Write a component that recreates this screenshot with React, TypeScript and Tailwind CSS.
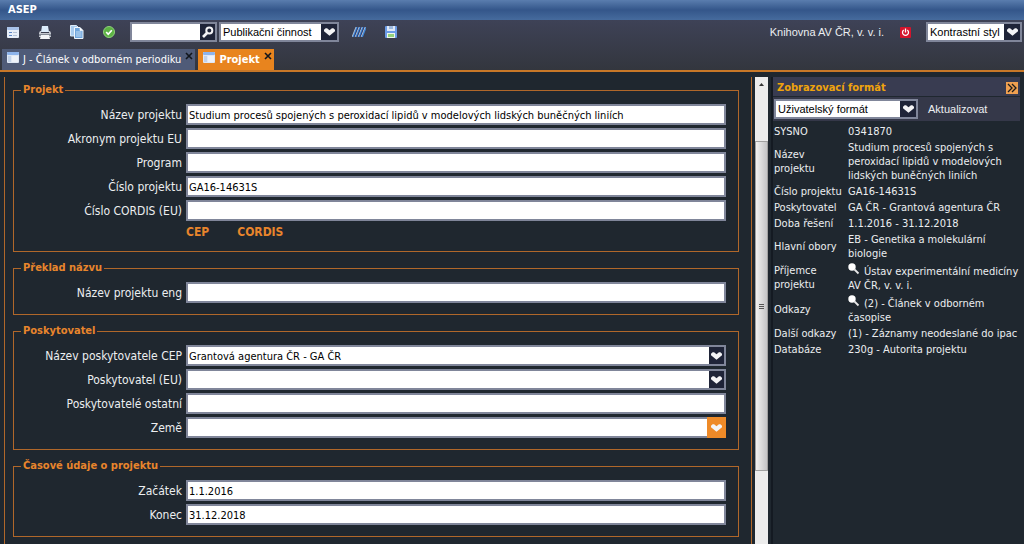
import { useState } from "react";
import type { ReactNode } from "react";

const projectFields = [
  { id: "title", label: "Název projektu", value: "Studium procesů spojených s peroxidací lipidů v modelových lidských buněčných liniích" },
  { id: "acronym", label: "Akronym projektu EU", value: "" },
  { id: "program", label: "Program", value: "" },
  { id: "number", label: "Číslo projektu", value: "GA16-14631S" },
  { id: "cordis", label: "Ćíslo CORDIS (EU)", value: "" },
];

const details = [
  { label: "SYSNO", text: "0341870" },
  { label: "Název projektu", text: "Studium procesů spojených s peroxidací lipidů v modelových lidských buněčných liniích" },
  { label: "Číslo projektu", text: "GA16-14631S" },
  { label: "Poskytovatel", text: "GA ČR - Grantová agentura ČR" },
  { label: "Doba řešení", text: "1.1.2016 - 31.12.2018" },
  { label: "Hlavní obory", text: "EB - Genetika a molekulární biologie" },
  { label: "Příjemce projektu", text: "Ústav experimentální medicíny AV ČR, v. v. i.", search: true },
  { label: "Odkazy", text: "(2) - Článek v odborném časopise", search: true },
  { label: "Další odkazy", text: "(1) - Záznamy neodeslané do ipac" },
  { label: "Databáze", text: "230g - Autorita projektu" },
];

function HeartArrow() {
  return (
    <svg viewBox="0 0 10 7" className="h-2 w-[11px]" fill="#f4f4f6">
      <path d="M0 1.5 1.5 0h1.3L5 2 7.2 0h1.3L10 1.5v1.3L5 7 0 2.8z" />
    </svg>
  );
}

function FormIcon() {
  return (
    <svg viewBox="0 0 12 11" className="h-[11px] w-3">
      <rect width="12" height="11" rx="1" fill="#e8eef8" />
      <rect width="12" height="3" rx="1" fill="#a9c3ea" />
      <path d="M2 5h3v1H2zM2 8h3v1H2z" fill="#5e86c4" />
      <path d="M6 5h4v1H6zM6 8h4v1H6z" fill="#b4c0d4" />
    </svg>
  );
}

function WindowIcon() {
  return (
    <svg viewBox="0 0 12 11" className="h-[11px] w-3">
      <rect width="12" height="11" rx="1" fill="#dfe8f5" />
      <rect width="12" height="3" rx="1" fill="#8db4ec" />
      <path d="M1 4h3v6H1z" fill="#c3d3ea" />
      <path d="M5 4h6v6H5z" fill="#eef2f9" />
    </svg>
  );
}

function PrinterIcon() {
  return (
    <svg viewBox="0 0 14 13" className="h-[13px] w-[14px]">
      <path d="M4 0h6l1 6H3z" fill="#dcecfb" />
      <path d="M2 5h1v2h8V5h1l1 2v4H1V7z" fill="#c4c8d0" />
      <path d="M1 8h12v2H1z" fill="#858b96" />
      <path d="M3 9h8l1 4H2z" fill="#f3f5f8" />
    </svg>
  );
}

function CopyIcon() {
  return (
    <svg viewBox="0 0 14 14" className="size-[14px]">
      <path d="M.5.5h6L9 3v8H.5z" fill="#a8cbee" stroke="#dcebf8" />
      <path d="M4.500 2.500h5.500l3 3v8H4.500z" fill="#6fa5dc" stroke="#eef6fd" />
      <path d="M6 7h5.500M6 9h5.500M6 11h5.500" stroke="#c5def5" />
      <path d="M10 2.500v3h3" fill="#fff" stroke="#fff" strokeWidth=".6" />
    </svg>
  );
}

function CheckIcon() {
  return (
    <svg viewBox="0 0 12 12" className="size-3">
      <circle cx="6" cy="6" r="5.500" fill="#5cb343" stroke="#8fd07c" />
      <path d="m3.200 6 2 2.200 3.600-4" fill="none" stroke="#fff" strokeWidth="1.700" />
    </svg>
  );
}

function StripesIcon() {
  return (
    <svg viewBox="0 0 14 10" className="h-[10px] w-[14px]" fill="none">
      <path d="M1 10 5 0M4 10 8 0M7 10l4-10M10 10l4-10" stroke="#3f86d6" strokeWidth="1.700" />
      <path d="M0 10 4 0M3 10 7 0M6 10l4-10M9 10l4-10" stroke="#e0e6f2" strokeWidth=".7" />
      <path d="M2 10 6 0M5 10 9 0M8 10l4-10" stroke="#1d2c6e" strokeWidth=".6" />
    </svg>
  );
}

function SaveIcon() {
  return (
    <svg viewBox="0 0 12 12" className="size-3">
      <rect width="12" height="12" rx="1" fill="#6b9be6" />
      <path d="M2 0h8v5H2z" fill="#dfe9f7" />
      <path d="M4 0h4v3H4z" fill="#9db9de" />
      <path d="M2 7h8v5H2z" fill="#eef6ea" />
      <path d="M3 8h6v3H3z" fill="#93d27c" />
    </svg>
  );
}

function PowerIcon() {
  return (
    <svg viewBox="0 0 11 11" className="size-[11px]" fill="none">
      <rect width="11" height="11" rx="1" fill="#d4142c" />
      <path d="M3.700 3a3 3 0 1 0 3.600 0M5.500 1.500v4" stroke="#fff" strokeWidth="1.300" />
    </svg>
  );
}

function SearchIcon() {
  return (
    <svg viewBox="0 0 12 12" className="size-3" fill="none" stroke="#f4f4f6">
      <circle cx="7.300" cy="4.500" r="3" strokeWidth="2" />
      <path d="M5 7 1 11" strokeWidth="2.600" />
    </svg>
  );
}

function LensIcon() {
  return (
    <svg viewBox="0 0 12 12" className="size-3">
      <circle cx="4" cy="4" r="3.700" fill="#fff" />
      <path d="m6.500 6.500 4 4" stroke="#e8e8e8" strokeWidth="1.800" />
    </svg>
  );
}

function ToolButton({ label, children }: { label: string; children: ReactNode }) {
  return (
    <button aria-label={label} className="flex size-4 items-center justify-center">
      {children}
    </button>
  );
}

function Dropdown({ label, value, className }: { label: string; value: string; className: string }) {
  return (
    <div className={`relative h-5 border-2 border-[#80869a] bg-white ${className}`}>
      <select
        aria-label={label}
        defaultValue={value}
        className="h-full w-full appearance-none pl-[2px] pr-4 font-['Liberation_Sans',sans-serif] text-[11px] leading-4 text-black outline-none"
      >
        <option>{value}</option>
      </select>
      <span className="pointer-events-none absolute inset-y-0 right-0 flex w-4 items-center justify-center bg-[#1f2438]">
        <HeartArrow />
      </span>
    </div>
  );
}

function Field({ id, label, value = "", arrow }: { id: string; label: string; value?: string; arrow?: "dark" | "active" }) {
  return (
    <div className="flex items-center gap-1">
      <label htmlFor={id} className="w-[168px] shrink-0 text-right text-[12px]">
        {label}
      </label>
      <div className="flex h-[21px] min-w-0 flex-1 border-2 border-[#80869a] bg-white">
        <input id={id} defaultValue={value} className="min-w-0 flex-1 px-px pt-[2px] text-black outline-none" />
        {arrow && (
          <button
            aria-label={`${label} – seznam`}
            className={`flex w-[15px] items-center justify-center ${
              arrow === "active" ? "bg-[#ee8a28] outline-2 outline-[#ee8a28]" : "bg-[#1f2438]"
            }`}
          >
            <HeartArrow />
          </button>
        )}
      </div>
    </div>
  );
}

function Section({ title, children }: { title: string; children: ReactNode }) {
  return (
    <fieldset className="min-w-0 border border-[#b0672a] pb-[11px] pr-3">
      <legend className="ml-[7px] px-[2px] font-bold text-[#e8852c]">{title}</legend>
      <div className="flex flex-col gap-[3px] pt-[7px]">{children}</div>
    </fieldset>
  );
}

function Tab({ title, active, onSelect }: { title: string; active: boolean; onSelect: () => void }) {
  return (
    <div className={`flex h-[21px] items-start pl-[5px] pr-[2px] ${active ? "bg-[#e8841e] font-bold" : "bg-[#4f5b78]"}`}>
      <button onClick={onSelect} className="flex items-start gap-1 pt-[3px] text-white">
        <WindowIcon />
        <span className="leading-4">{title}</span>
      </button>
      <button aria-label={`Zavřít ${title}`} className="ml-1 pt-[3px]">
        <svg viewBox="0 0 8 8" className="size-2" stroke="#11151c" strokeWidth="1.600">
          <path d="m1 1 6 6M7 1 1 7" />
        </svg>
      </button>
    </div>
  );
}

function Scrollbar() {
  return (
    <div className="flex w-[13px] shrink-0 flex-col bg-[#ececec]">
      <button aria-label="Posunout nahoru" className="flex h-[14px] items-center justify-center">
        <svg viewBox="0 0 5 3" className="h-[3px] w-[5px]" fill="#333">
          <path d="M0 3 2.500 0 5 3z" />
        </svg>
      </button>
      <div className="flex-1 pt-[50px]">
        <div className="flex h-[82%] flex-col items-center justify-center gap-px border border-[#a0a0a0] bg-linear-to-r from-[#f2f2f2] to-[#c4c4c6]">
          <span className="h-px w-[5px] bg-[#555]" />
          <span className="h-px w-[5px] bg-[#555]" />
          <span className="h-px w-[5px] bg-[#555]" />
        </div>
      </div>
    </div>
  );
}

export default function App() {
  const [tab, setTab] = useState("Projekt");

  return (
    <div className="flex h-screen flex-col overflow-hidden bg-[#1f272f] font-['DejaVu_Sans_Condensed','Noto_Sans',sans-serif] text-[11px] leading-[14px] text-[#eceef0]">
      {/* Title bar */}
      <header className="flex h-5 shrink-0 items-center bg-linear-to-b from-[#5a7dae] via-[#34568a] to-[#466b9d] px-2">
        <h1 className="font-bold text-white">ASEP</h1>
      </header>

      <div className="shrink-0 border-b-2 border-[#c87828] bg-linear-to-b from-[#3e4257] to-[#33363e]">
        {/* Toolbar */}
        <div className="flex h-6 items-center pl-[5px] pr-[2px]">
          <div className="flex gap-4">
            <ToolButton label="Formulář"><FormIcon /></ToolButton>
            <ToolButton label="Tisk"><PrinterIcon /></ToolButton>
            <ToolButton label="Kopírovat"><CopyIcon /></ToolButton>
            <ToolButton label="Potvrdit"><CheckIcon /></ToolButton>
          </div>
          <div className="ml-[13px] flex h-5 w-[87px] border-2 border-[#80869a] bg-white">
            <input aria-label="Hledat" className="min-w-0 flex-1 px-[2px] text-black outline-none" />
            <button aria-label="Spustit hledání" className="flex w-[15px] items-center justify-center bg-[#1f2438]">
              <SearchIcon />
            </button>
          </div>
          <Dropdown label="Databáze" value="Publikační činnost" className="ml-[2px] w-[120px]" />
          <div className="ml-3 flex gap-4">
            <ToolButton label="Rejstřík"><StripesIcon /></ToolButton>
            <ToolButton label="Uložit"><SaveIcon /></ToolButton>
          </div>
          <div className="ml-auto flex items-center gap-[13px]">
            <span className="font-['Liberation_Sans',sans-serif] text-[11px]">Knihovna AV ČR, v. v. i.</span>
            <ToolButton label="Odhlásit"><PowerIcon /></ToolButton>
            <Dropdown label="Styl" value="Kontrastní styl" className="w-[96px]" />
          </div>
        </div>

        {/* Tabs */}
        <nav className="flex gap-[3px] pl-[2px] pt-[5px]">
          {["J - Článek v odborném periodiku", "Projekt"].map((title) => (
            <Tab key={title} title={title} active={tab === title} onSelect={() => setTab(title)} />
          ))}
        </nav>
      </div>

      <div className="flex min-h-0 flex-1 pt-[5px]">
        {/* Form */}
        <main className="ml-1 flex min-w-0 flex-1 flex-col gap-[9px] overflow-hidden border-x border-[#b0672a] pl-2 pr-3 pt-[6px]">
          <Section title="Projekt">
            {projectFields.map((field) => (
              <Field key={field.id} {...field} />
            ))}
            <div className="flex gap-7 pl-[172px] text-[12px] font-bold leading-4 text-[#e8852c]">
              <a href="#cep">CEP</a>
              <a href="#cordis">CORDIS</a>
            </div>
          </Section>
          <Section title="Překlad názvu">
            <Field id="title-eng" label="Název projektu eng" />
          </Section>
          <Section title="Poskytovatel">
            <Field id="provider-cep" label="Název poskytovatele CEP" value="Grantová agentura ČR - GA ČR" arrow="dark" />
            <Field id="provider-eu" label="Poskytovatel (EU)" arrow="dark" />
            <Field id="provider-other" label="Poskytovatelé ostatní" />
            <Field id="country" label="Země" arrow="active" />
          </Section>
          <Section title="Časové údaje o projektu">
            <Field id="start" label="Začátek" value="1.1.2016" />
            <Field id="end" label="Konec" value="31.12.2018" />
          </Section>
        </main>
        <div className="ml-[3px] flex">
          <Scrollbar />
        </div>

        {/* Detail panel */}
        <aside className="ml-[3px] w-[253px] shrink-0 border-l-2 border-[#141a22] pr-1">
          <div className="flex h-[19px] items-center justify-between bg-[#393c51] pl-1 pr-[2px] pt-[2px]">
            <h2 className="font-bold text-[#f0a30c]">Zobrazovací formát</h2>
            <button aria-label="Skrýt panel" className="flex size-3 items-center justify-center bg-[#f0a050]">
              <svg viewBox="0 0 10 10" className="size-[10px]" fill="none" stroke="#1c1c1c" strokeWidth="1.300">
                <path d="m1 1 4 4-4 4M5 1l4 4-4 4" />
              </svg>
            </button>
          </div>
          <div className="mt-px flex h-6 items-center gap-[10px] bg-[#353849] pl-px">
            <Dropdown label="Formát" value="Uživatelský formát" className="w-[144px]" />
            <button className="font-['Liberation_Sans',sans-serif] text-[11px]">Aktualizovat</button>
          </div>
          <table className="mt-[3px] w-full">
            <tbody>
              {details.map((row) => (
                <tr key={row.label}>
                  <th scope="row" className="w-[74px] px-px py-px text-left align-middle font-normal">
                    {row.label}
                  </th>
                  <td className="py-px pl-px">
                    {row.search && (
                      <a href="#hledat" aria-label="Hledat" className="mr-1 inline-block h-4 align-bottom">
                        <LensIcon />
                      </a>
                    )}
                    {row.text}
                  </td>
                </tr>
              ))}
            </tbody>
          </table>
        </aside>
      </div>
    </div>
  );
}
